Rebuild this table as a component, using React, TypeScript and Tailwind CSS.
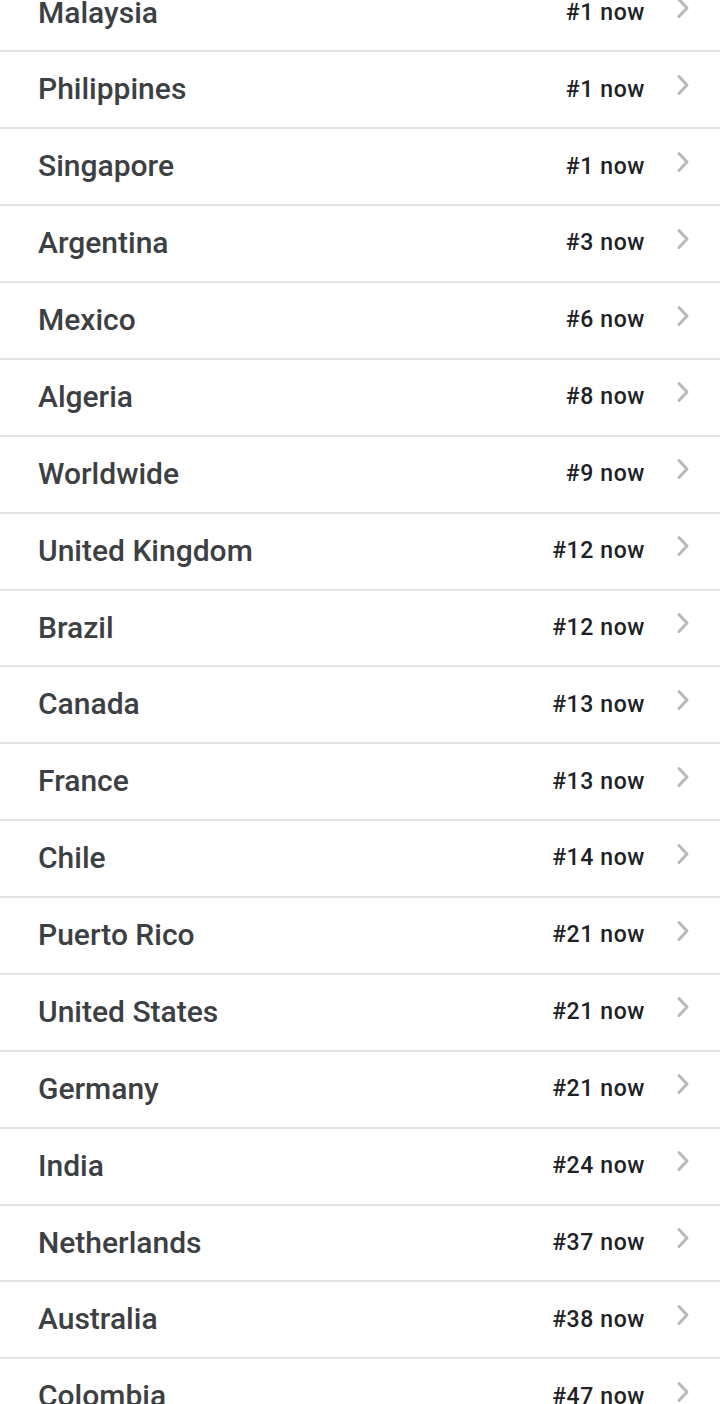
const rows: [string, string][] = [
  ["Malaysia", "#1"],
  ["Philippines", "#1"],
  ["Singapore", "#1"],
  ["Argentina", "#3"],
  ["Mexico", "#6"],
  ["Algeria", "#8"],
  ["Worldwide", "#9"],
  ["United Kingdom", "#12"],
  ["Brazil", "#12"],
  ["Canada", "#13"],
  ["France", "#13"],
  ["Chile", "#14"],
  ["Puerto Rico", "#21"],
  ["United States", "#21"],
  ["Germany", "#21"],
  ["India", "#24"],
  ["Netherlands", "#37"],
  ["Australia", "#38"],
  ["Colombia", "#47"],
];

function Chevron() {
  return (
    <svg width="18" height="24" viewBox="0 0 18 24" fill="none" className="shrink-0 -translate-y-[5px]">
      <path d="M5 3.5 L13 12 L5 20.5" stroke="#b9b9b9" strokeWidth="3" strokeLinecap="round" strokeLinejoin="round" />
    </svg>
  );
}

export default function App() {
  return (
    <div className="w-[720px] h-[1404px] overflow-hidden bg-white" style={{ fontFamily: "Roboto, 'Liberation Sans', sans-serif" }}>
      <div className="-mt-[24.4px]">
        {rows.map(([name, rank]) => (
          <div key={name} className="flex items-center h-[76.88px] border-b-2 border-[#e2e2e2] pl-[38px] pr-[28px]">
            <span className="flex-1 text-[30px] font-medium text-[#3c4043] -translate-y-[1px]">{name}</span>
            <span className="text-[23px] font-medium text-[#202124] tracking-[0.6px] mr-[29px]">{rank} now</span>
            <Chevron />
          </div>
        ))}
      </div>
    </div>
  );
}
